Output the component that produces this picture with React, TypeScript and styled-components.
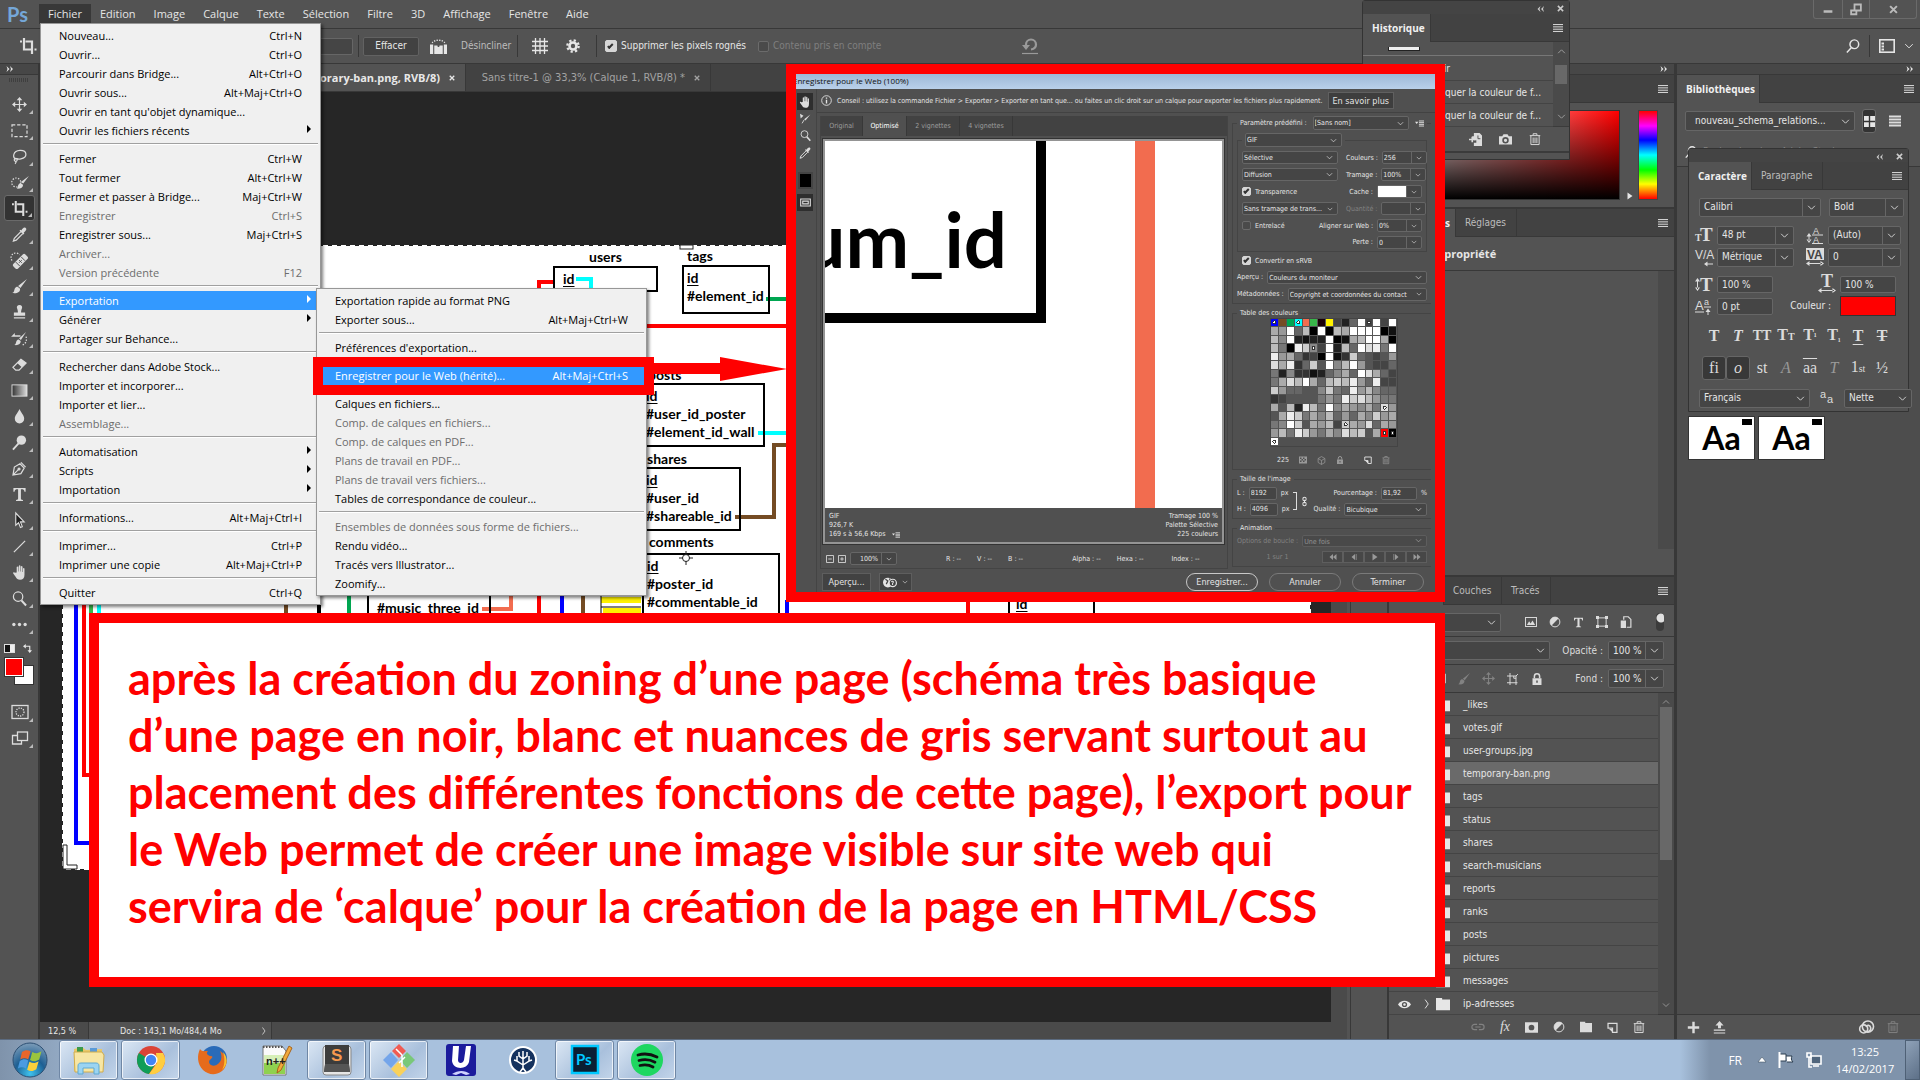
import React from "react";
import styled, { createGlobalStyle, css } from "styled-components";

const UI = '"DejaVu Sans Condensed", "Open Sans", sans-serif';
const SEGOE = '"Open Sans", "Noto Sans", sans-serif';
const CALIBRI = 'Lato, "Open Sans", sans-serif';

const C = {
  panel: "#535353",
  dark: "#424242",
  line: "#383838",
  field: "#454545",
  fieldLine: "#666666",
  text: "#e6e6e6",
  dim: "#a3a3a3",
  off: "#7f7f7f",
  red: "#ff0000",
};

const Global = createGlobalStyle`
  *, *::before, *::after { box-sizing: border-box; }
  body { margin: 0; background: #535353; overflow: hidden; }
  button, input, select { font: inherit; color: inherit; margin: 0; padding: 0; border: 0; background: none; border-radius: 0; }
  p, h2, ul { margin: 0; padding: 0; font: inherit; list-style: none; }
`;

/* ---------- icons ---------- */

const Svg = styled.svg<{ $s: number }>`
  width: ${(p) => p.$s}px;
  height: ${(p) => p.$s}px;
  flex: none;
  display: block;
  overflow: visible;
`;

type Draw = React.ReactNode;
const st = { fill: "none", stroke: "currentColor", strokeWidth: 1.3 };
const fl = { fill: "currentColor", stroke: "none" };

const ICONS: Record<string, Draw> = {
  move: (
    <g>
      <path {...st} d="M8 2v12M2 8h12" />
      <path {...fl} d="M8 0l3 3.4H5zM8 16l3-3.4H5zM0 8l3.4-3v6zM16 8l-3.4-3v6z" />
    </g>
  ),
  marquee: <rect {...st} x="0" y="2" width="16" height="12.500" strokeDasharray="3.500 2" />,
  lasso: (
    <g {...st}>
      <path d="M4.500 11C0 9 1 2 8.500 1.500c8-.3 8.500 7.500 1 9-2 .4-3.500.2-4.700-.3" />
      <circle cx="4" cy="11.500" r="1.600" />
      <path d="M4 13c.6 1 .2 2-.8 2.800" />
    </g>
  ),
  quick: (
    <g>
      <circle {...st} cx="4.500" cy="8" r="4.800" strokeDasharray="1.500 1.500" />
      <path {...fl} d="M18 1l-6 8-2.500-1.500zM9.200 8.700l2.600 1.600c0 3-3 4.700-6.800 4.200 1.500-1 1-3 2.200-4.700.5-.8 1.300-1.100 2-1.100z" />
    </g>
  ),
  crop: <path {...st} strokeWidth="2.200" d="M4 0v11.500h9M0 3.500h2M5.500 3.500h6.500v12.500M14.500 11.500h2" />,
  dropper: (
    <g>
      <path {...st} d="M9.500 5L2.500 12 1.500 15l3-1L11.500 7" />
      <path {...fl} d="M8 4l1-1 1 .7C11 2 12.500 0 14.300.8 16.300 2 15 4 12.500 6l.7 1-1 1z" />
    </g>
  ),
  heal: (
    <g>
      <path {...st} strokeDasharray="1.500 1.500" d="M0 8a5 5 0 0 1 8-6" />
      <g transform="rotate(-45 9 9)">
        <rect {...fl} x="0" y="5.500" width="18" height="7" rx="2" />
        <path d="M9 7v4M7 9h4M5 6v6M13 6v6" stroke="#535353" strokeWidth="1" />
      </g>
    </g>
  ),
  brush: (
    <path {...fl} d="M16 0L9 9.500 6.500 7.500zM6 8.300l2.600 2c.3 3.500-3 5.500-8.300 4.700 2.400-1 1.700-2.800 2.700-4.900.7-1.300 1.900-1.900 3-1.800z" />
  ),
  stamp: (
    <path {...fl} d="M8 0c2.200 0 3.200 1.600 2.700 3.300C10.200 5 9.700 6 9.700 8H14v3.500H2V8h4.300c0-2-.5-3-1-4.700C4.800 1.600 5.800 0 8 0zM2 13h12v1.500H2z" />
  ),
  history: (
    <g>
      <path {...fl} d="M15 1L9.500 9.500l-2-1.500zM7 9l2.300 1.700C9.300 14 7 15.500 2.500 15c2-1 1.500-2.500 2.300-4.300C5.300 9.600 6.200 9 7 9zM-1 6l4-4v2.500h6V6H3v0z" />
      <path {...st} strokeDasharray="1.500 1.500" d="M15 6c1 4 0 7.500-4 9" />
    </g>
  ),
  eraser: (
    <g>
      <path {...st} d="M9.500 2.500L15 6.500 7.500 14H4L1 11z" />
      <path {...fl} d="M9.500 2.500L15 6.500l-4.500 4.500-5-4.500z" />
    </g>
  ),
  gradient: (
    <g>
      <defs>
        <linearGradient id="tool-gradient">
          <stop offset="0" stopColor="#333" />
          <stop offset="1" stopColor="#ddd" />
        </linearGradient>
      </defs>
      <rect x="0" y="2" width="16" height="12" fill="url(#tool-gradient)" stroke="currentColor" />
    </g>
  ),
  drop: <path {...fl} d="M8 0c1.500 4 5 6.500 5 10.300A5 5 0 0 1 8 15.500a5 5 0 0 1-5-5.200C3 6.500 6.500 4 8 0z" />,
  dodge: (
    <g>
      <circle {...fl} cx="10" cy="5.500" r="5" />
      <path {...st} strokeWidth="2" d="M7 9L1 15.500" />
    </g>
  ),
  pen: (
    <g {...st}>
      <path d="M1 15l1.500-8.500L8.500 3l4.500 4.500-3.500 6zM1 15l6-6M9.500 1.500l5 5" />
      <circle cx="7.500" cy="8.500" r="1" />
    </g>
  ),
  type: <path {...fl} d="M1.500 1h13v4h-1.200c-.3-2-.9-2.500-3.800-2.500V12c0 1.500.4 1.700 2.200 1.800V15H4.300v-1.200c1.800-.1 2.200-.3 2.200-1.800V2.500C3.600 2.500 3 3 2.700 5H1.500z" />,
  select: <path d="M4 0l9 9.500H9l2 5-2 .9-2-5L4 13z" fill="#222" stroke="currentColor" strokeWidth="1.200" />,
  line: <path {...st} d="M2 14L14 2" />,
  hand: (
    <path {...fl} d="M5 8V2.500c0-1.200 1.600-1.200 1.700 0V7h.5V1.300C7.300 0 9 0 9 1.300V7h.5V2c0-1.200 1.700-1.200 1.700 0v5.500h.5V4c0-1.200 1.600-1.200 1.600 0v6.500c0 3.500-1.600 5.300-4.700 5.300-2.600 0-3.500-1.100-4.600-3L1.300 9c-.4-1 .8-1.700 1.600-.8z" />
  ),
  zoom: (
    <g {...st}>
      <circle cx="6.500" cy="6" r="5" />
      <path strokeWidth="2.200" d="M10 10l5 5.500" />
    </g>
  ),
  dots: (
    <g {...fl}>
      <circle cx="2" cy="8" r="1.800" />
      <circle cx="8" cy="8" r="1.800" />
      <circle cx="14" cy="8" r="1.800" />
    </g>
  ),
  mask: (
    <g {...st}>
      <rect x="0" y="1.500" width="16" height="13" />
      <circle cx="8" cy="8" r="4" strokeDasharray="1.200 1.200" />
    </g>
  ),
  screens: (
    <g {...st}>
      <path d="M5 5.500H.5V14h9v-3" />
      <rect x="5.500" y="2" width="10" height="8.500" />
    </g>
  ),
  swap: (
    <g>
      <path {...st} strokeWidth="2" d="M4 4h8v9" />
      <path {...fl} d="M0 4l5-4v8zM12 16l-4-5h8z" />
    </g>
  ),
  gear: (
    <g>
      <circle cx="8" cy="8" r="4" fill="none" stroke="currentColor" strokeWidth="3" />
      <circle cx="8" cy="8" r="6.500" fill="none" stroke="currentColor" strokeWidth="2.600" strokeDasharray="2.550 2.550" />
    </g>
  ),
  mesh: <path {...st} d="M3.500 0v16M8 0v16M12.500 0v16M0 3.500h16M0 8h16M0 12.500h16" />,
  level: (
    <g>
      <path {...fl} d="M0 6h3v9H0zM13 6h3v9h-3zM4 7h3c0 2 2 2 2 0h3v8H4z" />
      <path {...st} strokeDasharray="1.200 1.200" d="M2 4.500a7 5 0 0 1 12 0" />
    </g>
  ),
  undo: (
    <g {...st} strokeWidth="2.200">
      <path d="M4 9V6.500a5 5 0 0 1 10 0c0 3-2 4.500-5 5" />
      <path {...fl} d="M0 7h8l-4 5z" />
      <path strokeWidth="1.200" d="M0 15.500h16" />
    </g>
  ),
  search: (
    <g {...st} strokeWidth="1.700">
      <circle cx="9.500" cy="6" r="5" />
      <path d="M6 10l-5 5.500" />
    </g>
  ),
  workspace: (
    <g>
      <rect {...st} strokeWidth="1.600" x="0.800" y="1.800" width="14.400" height="12.400" />
      <path {...fl} d="M2.500 4.500h2.500v2H2.500zM2.500 7.500h2.500v2H2.500zM2.500 10.500h2.500v2H2.500z" />
    </g>
  ),
  chevron: <path {...st} strokeWidth="1.500" d="M2 5l6 6 6-6" />,
  up: <path {...st} strokeWidth="1.500" d="M2 11l6-6 6 6" />,
  right: <path {...st} strokeWidth="1.500" d="M5 1l5 7-5 7" />,
  dright: <path {...fl} d="M1 2l6 6-6 6 2-6zM8 2l6 6-6 6 2-6z" />,
  dleft: <path {...fl} d="M7 2L1 8l6 6-2-6zM14 2L8 8l6 6-2-6z" />,
  close: <path {...st} strokeWidth="3.500" d="M2 2l12 12M14 2L2 14" />,
  burger: <path {...st} strokeWidth="1.500" d="M0 2.500h16M0 6.200h16M0 9.900h16M0 13.500h16" />,
  list: <path {...st} strokeWidth="2.600" d="M0 2h16M0 6h16M0 10h16M0 14h16" />,
  tiles: <path {...fl} d="M0 0h7v7H0zM9 0h7v7H9zM0 9h7v7H0zM9 9h7v7H9z" />,
  newdoc: (
    <g>
      <path {...fl} d="M6 0h7l3 3v13H6v-4h3V9H6V8H4V4h2z" />
      <path {...st} strokeWidth="2" d="M0 8h8M4 4.500v7" />
      <path d="M11 3v4h3" fill="none" stroke="#424242" />
    </g>
  ),
  camera: (
    <path fillRule="evenodd" {...fl} d="M0 4h4l1.500-2.500h5L12 4h4v10H0zM8 5a4 4 0 1 0 0 8 4 4 0 0 0 0-8zm0 2a2 2 0 1 1 0 4 2 2 0 0 1 0-4z" />
  ),
  trash: (
    <g {...st}>
      <path d="M1 3.500h14M5.500 3V1h5v2M2.500 4v11.400h11V4M5.500 6v7.500M8 6v7.500M10.500 6v7.500" />
    </g>
  ),
  link: (
    <g {...st}>
      <path d="M7 5H4a3 3 0 0 0 0 6h3M9 5h3a3 3 0 0 1 0 6H9M5 8h6" />
    </g>
  ),
  chain: (
    <g {...st} strokeWidth="1.800">
      <circle cx="8" cy="3.500" r="3" />
      <circle cx="8" cy="12.500" r="3" />
      <path d="M8 5v6" />
    </g>
  ),
  fmask: (
    <path fillRule="evenodd" {...fl} d="M0 1.500h16v13H0zM8 4.500a3.500 3.500 0 1 0 0 7 3.500 3.500 0 0 0 0-7z" />
  ),
  adjust: (
    <g>
      <circle {...st} cx="8" cy="8" r="6.500" />
      <path {...fl} d="M12.600 3.400A6.500 6.500 0 1 0 3.400 12.600z" />
    </g>
  ),
  folder: <path {...fl} d="M0 1h7v1.800h9V15H0z" />,
  page: (
    <g>
      <path {...st} strokeWidth="1.800" d="M1.500 2h13v13H8L8 9H1.500z" />
      <path {...fl} d="M3 10h5v5z" />
    </g>
  ),
  image: (
    <g>
      <rect {...st} x="0.700" y="2" width="14.600" height="12" />
      <path {...fl} d="M2.500 12l3-5 2 3 2.500-4 3.500 6z" />
    </g>
  ),
  frame: (
    <g {...st}>
      <path d="M2.500 3v10M13.500 3v10M3 2.500h10M3 13.500h10" />
      <path {...fl} d="M0 0h4v4H0zM12 0h4v4h-4zM0 12h4v4H0zM12 12h4v4h-4z" />
    </g>
  ),
  smart: (
    <g>
      <path {...st} strokeWidth="1.600" d="M5 5V1h6l3.500 3.500V15H9" />
      <path {...fl} d="M1 6h7v10H1z" />
    </g>
  ),
  artboard: <path {...st} d="M4 0v16M0 4h12v12M0 13h14M9 4v3h3M14.500 1.500L12 4" />,
  lock: (
    <g>
      <path {...st} strokeWidth="2" d="M4.500 7V4.500a3.500 3.500 0 0 1 7 0V7" />
      <path fillRule="evenodd" {...fl} d="M2 7h12v9H2zM7 10v3h2v-3z" />
    </g>
  ),
  checker: <path {...fl} fillRule="evenodd" d="M0 1h16v14H0zM2 3v3h3V3zM8 3v3h3V3zM5 6v3h3V6zM11 6v3h3V6zM2 9v3h3V9zM8 9v3h3V9z" />,
  eye: (
    <g>
      <path {...fl} d="M0 8c3.500-6 12.500-6 16 0-3.500 6-12.500 6-16 0z" />
      <circle cx="8" cy="8" r="3.200" fill="#535353" />
      <circle {...fl} cx="8" cy="8" r="1.500" />
    </g>
  ),
  plus: <path {...st} strokeWidth="3" d="M8 1v14M1 8h14" />,
  upload: <path {...fl} d="M8 0l5 5.500h-3.200V9H6.200V5.500H3zM1 10.500h14V12H1zM1 14h14v1.500H1z" />,
  cloud: (
    <g {...st} strokeWidth="1.700">
      <circle cx="9.500" cy="7" r="6" />
      <circle cx="5" cy="9.500" r="4.300" />
      <path d="M7 11.500c2 2 6 .5 5.500-3S8.500 5 7.500 7.500" />
    </g>
  ),
  info: (
    <g {...st}>
      <circle cx="8" cy="8" r="7" />
      <path strokeWidth="2" d="M8 7v5.500M8 3.500v2" />
    </g>
  ),
  slice: (
    <g>
      <path {...fl} d="M15 2L8 11l-2-2zM0 1l5 3-4 4z" />
      <path {...st} d="M6 10l-3 5" />
    </g>
  ),
  globe: (
    <g>
      <circle {...fl} cx="6" cy="8" r="6" />
      <path d="M3 4l3 2-2 4M8 3l1 3" fill="none" stroke="#444" strokeWidth="1.500" />
      <circle cx="12" cy="8.500" r="4.500" fill="#424242" stroke="currentColor" strokeWidth="1.500" />
      <path {...st} d="M10.500 7.500c.5-2 3-1 2 .5l-.7 1v2" />
    </g>
  ),
  flyout: (
    <g>
      <path {...fl} d="M0 5h6l-3 4z" />
      <path {...st} strokeWidth="1.600" d="M7 3.500h9M7 6.500h9M7 9.500h9M7 12.500h9" />
    </g>
  ),
  cube: <path {...st} d="M8 1l6 3.500v7L8 15l-6-3.500v-7zM2 4.500L8 8l6-3.500M8 8v7" />,
  boxminus: <path {...st} strokeWidth="1.600" d="M1 1h14v14H1zM4.500 8h7" />,
  boxplus: <path {...st} strokeWidth="1.600" d="M1 1h14v14H1zM4.500 8h7M8 4.500v7" />,
  first: <path {...fl} d="M8 2v12L1 8zM15 2v12L8 8z" />,
  prev: <path {...fl} d="M10 2v12L3 8zM11.500 2H13v12h-1.500z" />,
  play: <path {...fl} d="M3 1l10 7-10 7z" />,
  next: <path {...fl} d="M6 2v12l7-6zM3 2h1.500v12H3z" />,
  last: <path {...fl} d="M1 2v12l7-6zM8 2v12l7-6z" />,
  view: <path {...st} strokeWidth="1.600" d="M1 3h14v10H1zM4 6h8v4H4z" />,
  min: <path {...st} strokeWidth="4" d="M1 12h14" />,
  restore: <path {...st} strokeWidth="2.400" d="M5.500 10H1.500v5h7v-5M6 2h8.500v8H6z" />,
};

const Icon = ({ n, s = 16 }: { n: string; s?: number }) => (
  <Svg $s={s} viewBox="0 0 16 16" aria-hidden="true">
    {ICONS[n]}
  </Svg>
);

/* ---------- shared controls ---------- */

const Row = styled.div<{ $gap?: number; $h?: number }>`
  display: flex;
  align-items: center;
  gap: ${(p) => p.$gap ?? 8}px;
  ${(p) => p.$h && `height: ${p.$h}px;`}
`;
const Grow = styled.span`
  flex: 1;
`;
const Nudge = styled.span`
  width: 1px;
`;
const Spacer = styled.span`
  width: 8px;
  flex: none;
`;
const Dim = styled.span`
  color: #828282;
`;
const Gray = styled.span`
  color: #bdbdbd;
`;
const IconButton = styled.button<{ $w?: number; $tone?: string }>`
  display: flex;
  align-items: center;
  justify-content: center;
  width: ${(p) => p.$w ?? 16}px;
  flex: none;
  color: ${(p) => p.$tone ?? "#dcdcdc"};
`;
const Box = styled.span<{ $w?: number; $h: number; $grow?: boolean }>`
  position: relative;
  display: flex;
  align-items: center;
  ${(p) => (p.$grow ? "flex: 1; min-width: 0;" : `width: ${p.$w}px; flex: none;`)}
  height: ${(p) => p.$h}px;
  background: ${C.field};
  border: 1px solid ${C.fieldLine};
  border-radius: 2px;
  color: ${C.text};
  & > svg {
    margin: 0 4px;
    pointer-events: none;
  }
`;
const Sel = styled.select<{ $pad: number }>`
  appearance: none;
  flex: 1;
  min-width: 0;
  height: 100%;
  padding-left: ${(p) => p.$pad}px;
  text-overflow: ellipsis;
  outline: none;
`;
const Field = styled.input<{ $pad: number }>`
  flex: 1;
  min-width: 0;
  width: 100%;
  height: 100%;
  padding-left: ${(p) => p.$pad}px;
  outline: none;
`;
const Split = styled.span`
  width: 1px;
  height: 100%;
  background: ${C.fieldLine};
`;

type CtlProps = {
  id: string;
  label?: string;
  value: string;
  w?: number;
  h?: number;
  grow?: boolean;
  pad?: number;
  split?: boolean;
  ic?: number;
  disabled?: boolean;
};
const Select = ({ id, label, value, w, h = 18, grow, pad = 5, split, ic = 9, disabled }: CtlProps) => (
  <Box $w={w} $h={h} $grow={grow}>
    <Sel id={id} aria-label={label} $pad={pad} disabled={disabled}>
      <option>{value}</option>
    </Sel>
    {split && <Split />}
    <Icon n="chevron" s={ic} />
  </Box>
);
const Input = ({ id, label, value, w, h = 16, grow, pad = 4 }: CtlProps) => (
  <Box $w={w} $h={h} $grow={grow}>
    <Field id={id} aria-label={label} $pad={pad} defaultValue={value} />
  </Box>
);

const Check = styled.input<{ $s: number }>`
  appearance: none;
  width: ${(p) => p.$s}px;
  height: ${(p) => p.$s}px;
  flex: none;
  border: 1px solid #6b6b6b;
  border-radius: 2px;
  background: #4a4a4a;
  display: grid;
  place-items: center;
  &:checked {
    background: #d6d6d6;
    border-color: #d6d6d6;
  }
  &:checked::after {
    content: "";
    width: 6px;
    height: 3px;
    border: solid #333;
    border-width: 0 0 2px 2px;
    transform: rotate(-45deg) translate(0, -1px);
  }
`;

/* ---------- page frame ---------- */

const Shell = styled.div`
  position: relative;
  display: flex;
  flex-direction: column;
  height: 100vh;
  overflow: hidden;
  background: ${C.panel};
  color: ${C.text};
  font: 10px/14px ${UI};
`;
const MenuBar = styled.nav`
  display: flex;
  align-items: center;
  height: 29px;
  flex: none;
  padding: 0 0 1px 7px;
  border-bottom: 1px solid ${C.line};
  font: 11px/16px ${SEGOE};
`;
const PsMark = styled.span`
  width: 32px;
  font: 700 20px/24px ${CALIBRI};
  color: #75a7d8;
`;
const MenuTitle = styled.button<{ $open?: boolean }>`
  height: 20px;
  padding: 0 9px;
  ${(p) => p.$open && "background: #383838;"}
`;
const WinButtons = styled.div`
  display: flex;
  align-self: flex-start;
  height: 19px;
  margin: 0 3px 0 auto;
  border: 1px solid #6a6a6a;
  border-top: 0;
  border-radius: 0 0 3px 3px;
  & > button + button {
    border-left: 1px solid #6a6a6a;
  }
`;

const OptionsBar = styled.div`
  display: flex;
  align-items: center;
  height: 35px;
  flex: none;
  padding: 0 6px;
  border-bottom: 1px solid ${C.line};
`;
const Cell = styled.div<{ $w: number; $pl?: number; $dim?: boolean }>`
  display: flex;
  align-items: center;
  width: ${(p) => p.$w}px;
  padding-left: ${(p) => p.$pl ?? 0}px;
  gap: 4px;
  flex: none;
  white-space: nowrap;
  ${(p) => p.$dim && `color: ${C.off};`}
`;
const Rule = styled.span`
  width: 1px;
  height: 22px;
  flex: none;
  background: ${C.line};
`;
const Plain = styled.button`
  width: 56px;
  height: 19px;
  background: ${C.dark};
  border: 1px solid #626262;
  border-radius: 2px;
`;
const CropSlot = styled.span`
  padding-left: 14px;
  color: #ddd;
`;

const Main = styled.div`
  display: flex;
  flex: 1;
  min-height: 0;
`;

/* ---------- tool column ---------- */

const Tools = styled.aside`
  width: 40px;
  flex: none;
  border-right: 2px solid ${C.line};
`;
const Strip = styled.div<{ $end?: boolean }>`
  display: flex;
  align-items: center;
  justify-content: ${(p) => (p.$end ? "flex-end" : "flex-start")};
  height: 11px;
  flex: none;
  padding: 0 6px;
  background: #474747;
  border-bottom: 1px solid ${C.line};
`;
const Grip = styled.div`
  width: 20px;
  height: 4px;
  margin: 3px 0 9px 9px;
  background: repeating-linear-gradient(90deg, #3f3f3f 0 1px, transparent 1px 2px);
`;
const Tool = styled.button<{ $on?: boolean }>`
  position: relative;
  display: flex;
  align-items: center;
  justify-content: center;
  width: 31px;
  height: 26px;
  margin-left: 4px;
  color: #dcdcdc;
  ${(p) => p.$on && "background: #333; border: 1px solid #6a6a6a; border-radius: 3px;"}
  &::after {
    content: "";
    position: absolute;
    right: 2px;
    bottom: 3px;
    border: 2px solid transparent;
    border-right-color: #bbb;
    border-bottom-color: #bbb;
  }
`;
const Swatches = styled.div`
  padding: 2px 0 12px 4px;
`;
const MiniPair = styled.span`
  width: 11px;
  height: 9px;
  background: linear-gradient(90deg, #111 60%, #eee 60%);
  border: 1px solid #ddd;
`;
const Pair = styled.div`
  position: relative;
  height: 30px;
`;
const Swatch = styled.button<{ $c: string; $x: number; $y: number }>`
  position: absolute;
  left: ${(p) => p.$x}px;
  top: ${(p) => p.$y}px;
  width: 18px;
  height: 18px;
  background: ${(p) => p.$c};
  border: 1px solid #fff;
  outline: 1px solid #333;
`;

/* ---------- document area ---------- */

const Doc = styled.section`
  display: flex;
  flex-direction: column;
  flex: 1;
  min-width: 0;
`;
const DocTabs = styled.div`
  display: flex;
  height: 28px;
  flex: none;
  background: ${C.dark};
  border-bottom: 1px solid ${C.line};
`;
const DocTab = styled.div<{ $w: number; $on?: boolean }>`
  display: flex;
  align-items: center;
  justify-content: flex-end;
  gap: 9px;
  width: ${(p) => p.$w}px;
  padding-right: 10px;
  white-space: nowrap;
  border-right: 1px solid ${C.line};
  color: ${(p) => (p.$on ? "#e8e8e8" : C.dim)};
  font-size: 11px;
  ${(p) => p.$on && `background: ${C.panel}; font: 700 11px/14px ${SEGOE};`}
`;
const Stage = styled.div`
  display: flex;
  flex: 1;
  min-height: 0;
`;
const Canvas = styled.div`
  position: relative;
  flex: 1;
  overflow: hidden;
  background: #262626;
  color: #000;
  font: 700 14px/18px ${CALIBRI};
`;
const VBar = styled.div`
  width: 16px;
  flex: none;
  background: #4a4a4a;
`;
const Status = styled.footer`
  display: flex;
  align-items: center;
  height: 17px;
  flex: none;
  background: #4a4a4a;
  font-size: 9px;
  & > span {
    padding-left: 8px;
    width: 48px;
  }
  & > div {
    display: flex;
    align-items: center;
    justify-content: space-between;
    width: 184px;
    height: 17px;
    padding: 0 3px 0 31px;
    background: ${C.panel};
    border: 1px solid ${C.line};
    border-width: 0 1px;
  }
`;
const Artboard = styled.div`
  position: absolute;
  left: 22px;
  top: 153px;
  width: 1249px;
  height: 625px;
  background: #fff;
`;
const Ants = styled.svg`
  position: absolute;
  inset: 0;
  width: 100%;
  height: 100%;
`;
const Node = styled.div<{ $x: number; $y: number; $w: number; $h: number; $in?: number }>`
  position: absolute;
  left: ${(p) => p.$x}px;
  top: ${(p) => p.$y}px;
  width: ${(p) => p.$w}px;
  height: ${(p) => p.$h}px;
  padding: 2px ${(p) => p.$in ?? 3}px;
  border: 2px solid #000;
  white-space: nowrap;
  & > div {
    height: 18px;
    text-underline-offset: 2px;
  }
`;
const NodeName = styled.div<{ $x: number; $y: number }>`
  position: absolute;
  left: ${(p) => p.$x}px;
  top: ${(p) => p.$y}px;
`;

/* ---------- docks ---------- */

const MiniDock = styled.aside`
  width: 39px;
  flex: none;
  margin-left: 3px;
  border: 1px solid ${C.line};
  border-width: 0 2px 0 1px;
`;
const Dock = styled.aside<{ $w: number }>`
  display: flex;
  flex-direction: column;
  width: ${(p) => p.$w}px;
  flex: none;
  border-right: 3px solid ${C.line};
`;
const Tabs = styled.div`
  display: flex;
  align-items: center;
  height: 28px;
  flex: none;
  padding-right: 6px;
  background: ${C.dark};
  border-bottom: 1px solid ${C.line};
`;
const Tab = styled.button<{ $w: number; $on?: boolean; $end?: boolean }>`
  width: ${(p) => p.$w}px;
  height: 27px;
  padding: 0 0 0 9px;
  text-align: ${(p) => (p.$end ? "right" : "left")};
  color: ${(p) => (p.$on ? "#f0f0f0" : "#bdbdbd")};
  border-right: 1px solid ${C.line};
  white-space: nowrap;
  ${(p) => p.$end && "padding-right: 9px;"}
  ${(p) => p.$on && `background: ${C.panel}; height: 28px; font: 700 10px/14px ${SEGOE};`}
`;
const ColorBody = styled.div`
  display: flex;
  gap: 17px;
  height: 106px;
  flex: none;
  padding: 7px 16px 7px 20px;
  border-bottom: 2px solid ${C.line};
`;
const ColorField = styled.div`
  flex: 1;
  border: 1px solid #333;
  background: linear-gradient(to top, #000, transparent), linear-gradient(to right, #fff, #f00);
`;
const Hue = styled.div`
  width: 20px;
  border: 1px solid #444;
  background: linear-gradient(#f00, #f0f 17%, #00f 33%, #0ff 50%, #0f0 67%, #ff0 83%, #f00);
`;
const HueSlot = styled.div`
  display: flex;
  align-items: flex-end;
  gap: 4px;
  margin-left: -11px;
  & > div {
    height: 100%;
  }
`;
const PropsTitle = styled.div`
  height: 34px;
  flex: none;
  padding: 10px 0 0 11px;
  border-bottom: 1px solid ${C.line};
  font: 700 11px/14px ${SEGOE};
`;
const PropsBody = styled.div`
  display: flex;
  flex: 1;
  padding-bottom: 26px;
  border-bottom: 2px solid ${C.line};
  justify-content: flex-end;
`;
const Bar = styled.div<{ $h: number; $pt?: number }>`
  display: flex;
  align-items: center;
  gap: 12px;
  height: ${(p) => p.$h}px;
  flex: none;
  padding: ${(p) => p.$pt ?? 0}px 10px 0 8px;
  color: #dcdcdc;
  border-bottom: 1px solid ${C.line};
`;
const Toggle = styled.button`
  width: 10px;
  height: 18px;
  border-radius: 5px;
  background: radial-gradient(circle at 5px 5px, #e0e0e0 0 4px, transparent 5px), #3b3b3b;
`;
const Layers = styled.div`
  display: flex;
  height: 322px;
  flex: none;
  border-bottom: 1px solid ${C.line};
`;
const LayerList = styled.ul`
  flex: 1;
`;
const Layer = styled.li<{ $on?: boolean }>`
  display: flex;
  align-items: center;
  height: 23px;
  padding: 2px 0 0 9px;
  color: #e6e6e6;
  border-bottom: 1px solid #444;
  ${(p) => p.$on && "background: #6a6a6a;"}
  & > span:last-child {
    margin-left: 13px;
  }
`;
const EyeCell = styled.span`
  width: 34px;
  display: flex;
  align-items: center;
  justify-content: space-between;
  margin-right: 4px;
`;
const Scroll = styled.div`
  display: flex;
  flex-direction: column;
  align-items: center;
  justify-content: space-between;
  width: 16px;
  padding: 5px 0;
  background: #4a4a4a;
  color: #aaa;
`;
const Thumb = styled.span<{ $h: number; $gap: number }>`
  width: 12px;
  height: ${(p) => p.$h}px;
  background: #686868;
  margin-bottom: ${(p) => p.$gap}px;
`;
const LayerFoot = styled.div`
  display: flex;
  align-items: center;
  justify-content: flex-end;
  gap: 15px;
  height: 24px;
  flex: none;
  padding-right: 29px;
  color: #dcdcdc;
`;
const Fx = styled.i`
  font: italic 14px/16px "Liberation Serif", serif;
`;
const LibDock = styled.aside`
  display: flex;
  flex-direction: column;
  width: 243px;
  flex: none;
`;
const LibBody = styled.div`
  flex: 1;
  background: #4d4d4d;
`;
const LibHead = styled.div`
  padding: 6px 13px 0 8px;
  height: 64px;
  background: ${C.panel};
  border-bottom: 1px solid ${C.line};
`;
const LibSearch = styled.div`
  display: flex;
  align-items: center;
  gap: 6px;
  height: 37px;
`;
const TileBtn = styled.button`
  display: grid;
  place-items: center;
  width: 24px;
  height: 24px;
  border: 1px solid #6a6a6a;
  border-radius: 3px;
  background: #333;
`;
const Styles = styled.div`
  display: flex;
  gap: 3px;
  padding: 249px 0 0 11px;
`;
const StyleTile = styled.button`
  position: relative;
  width: 67px;
  height: 44px;
  background: #fff;
  border: 1px solid #333;
  color: #000;
  font: 700 32px/42px ${CALIBRI};
  &::after {
    content: "";
    position: absolute;
    right: 2px;
    top: 2px;
    width: 10px;
    height: 6px;
    background: #000;
  }
`;
const LibFoot = styled.div`
  display: flex;
  align-items: center;
  gap: 13px;
  height: 25px;
  flex: none;
  padding: 0 21px 0 10px;
  color: #dcdcdc;
  border-top: 1px solid ${C.line};
`;

/* ---------- taskbar ---------- */

const Taskbar = styled.footer`
  display: flex;
  align-items: center;
  height: 41px;
  flex: none;
  padding-left: 3px;
  border-top: 1px solid #5b6b80;
  background: linear-gradient(90deg, #7f93ab 0, #a8c1dd 130px, #a8c1dd 1680px, #7f93ab 1710px);
  font: 12px/17px ${SEGOE};
`;
const TaskItem = styled.button<{ $on?: boolean; $w?: number }>`
  display: grid;
  place-items: center;
  width: ${(p) => p.$w ?? 59}px;
  height: 40px;
  margin-right: 3px;
  border-radius: 3px;
  border: 1px solid transparent;
  ${(p) =>
    p.$on &&
    css`
      border-color: #6f87a5;
      box-shadow: inset 0 0 0 1px rgba(255, 255, 255, 0.7);
      background: linear-gradient(135deg, #dbe7f4, #a9c0dc 60%, #c3d5ea);
    `}
`;
const Tray = styled.div`
  display: flex;
  align-items: center;
  gap: 12px;
  height: 40px;
  margin-left: auto;
  color: #fff;
`;
const Lang = styled.span`
  margin-right: 4px;
`;
const Clock = styled.time`
  text-align: center;
  width: 62px;
  font-size: 11px;
`;
const Peek = styled.button`
  width: 15px;
  height: 40px;
  margin-left: -3px;
  border: 1px solid #4f6176;
  background: linear-gradient(135deg, #8fa2b8, #5d7088);
`;

/* ---------- floating windows ---------- */

const Float = styled.section<{ $x: number; $y: number; $w: number; $h: number }>`
  position: absolute;
  left: ${(p) => p.$x}px;
  top: ${(p) => p.$y}px;
  width: ${(p) => p.$w}px;
  height: ${(p) => p.$h}px;
  background: ${C.panel};
  border: 1px solid #333;
  border-radius: 3px 3px 0 0;
`;
const FloatHead = styled.div`
  display: flex;
  align-items: center;
  justify-content: flex-end;
  gap: 12px;
  height: 13px;
  padding: 2px 5px 0 0;
  background: #444;
  color: #ccc;
`;
const HistoryList = styled.div`
  display: flex;
  height: 84px;
`;
const HistoryCol = styled.div`
  flex: 1;
`;
const Snapshot = styled.div`
  height: 14px;
  padding: 5px 0 0 25px;
  border-bottom: 1px solid #777;
  & > i {
    display: block;
    width: 32px;
    height: 4px;
    background: #eee;
    border: 1px solid #222;
    border-top: 0;
  }
`;
const HistoryRow = styled.div<{ $h: number; $pr: number }>`
  height: ${(p) => p.$h}px;
  padding-right: ${(p) => p.$pr}px;
  line-height: ${(p) => p.$h}px;
  text-align: right;
  white-space: nowrap;
  border-bottom: 1px solid #444;
`;
const HistoryFoot = styled.div`
  display: flex;
  align-items: center;
  justify-content: flex-end;
  gap: 17px;
  height: 27px;
  padding-right: 28px;
  border: solid #3b3b3b;
  border-width: 1px 0 2px;
  color: #dcdcdc;
`;
const CharBody = styled.div`
  padding: 6px 7px 0 6px;
`;
const CharRow = styled.div<{ $mt?: number }>`
  display: flex;
  align-items: center;
  gap: 4px;
  height: 22px;
  margin-top: ${(p) => p.$mt ?? 0}px;
`;
const Faces = styled.div<{ $mt: number }>`
  display: flex;
  justify-content: center;
  margin-top: ${(p) => p.$mt}px;
`;
const Face = styled.button<{ $on?: boolean; $bold?: boolean; $off?: boolean; $css?: string }>`
  width: 24px;
  height: 24px;
  flex: none;
  font: ${(p) => (p.$bold ? 700 : 400)} 16px/20px "Liberation Serif", serif;
  white-space: nowrap;
  color: ${(p) => (p.$off ? "#999" : "#dcdcdc")};
  ${(p) => p.$on && "background: #383838; border: 1px solid #666; border-radius: 3px;"}
  ${(p) => p.$css}
  & small {
    font-size: 10px;
  }
`;
const Patch = styled.button`
  width: 56px;
  height: 20px;
  background: ${C.red};
  border: 1px solid #333;
`;
const GlyphSvg = styled.svg`
  width: 18px;
  height: 18px;
  flex: none;
  overflow: visible;
  fill: #dcdcdc;
  stroke: none;
  font-family: "Liberation Serif", serif;
`;

/* ---------- drop-down menus ---------- */

const Menu = styled.ul<{ $x: number; $y: number; $w: number }>`
  position: absolute;
  left: ${(p) => p.$x}px;
  top: ${(p) => p.$y}px;
  width: ${(p) => p.$w}px;
  padding: 2px;
  background: #f0f0f0;
  border: 1px solid #979797;
  box-shadow: 2px 2px 3px rgba(0, 0, 0, 0.5);
  color: #000;
  font: 11px/19px ${SEGOE};
`;
const MenuSep = styled.li`
  height: 9px;
  padding-top: 3px;
  &::before {
    content: "";
    display: block;
    height: 2px;
    border-top: 1px solid #a0a0a0;
    background: #fff;
  }
`;
const MenuEntry = styled.button<{ $on?: boolean; $off?: boolean }>`
  position: relative;
  display: flex;
  justify-content: space-between;
  width: 100%;
  height: 19px;
  padding: 0 16px;
  white-space: nowrap;
  color: ${(p) => (p.$off ? "#6d6d6d" : p.$on ? "#fff" : "#000")};
  ${(p) => p.$on && "background: #3399ff;"}
`;
const Arrow = styled.i`
  position: absolute;
  right: 7px;
  top: 4px;
  border: 4px solid transparent;
  border-left-color: currentColor;
  border-right: 0;
`;
type Item = null | [string, string?, ("off" | "on" | "sub" | "onsub")?];

const MenuBox = ({ items, ...pos }: { items: Item[]; $x: number; $y: number; $w: number }) => (
  <Menu {...pos}>
    {items.map((it, i) =>
      it === null ? (
        <MenuSep key={i} />
      ) : (
        <li key={i}>
          <MenuEntry $on={it[2] === "on" || it[2] === "onsub"} $off={it[2] === "off"}>
            <span>{it[0]}</span>
            <span>{it[1]}</span>
            {(it[2] === "sub" || it[2] === "onsub") && <Arrow />}
          </MenuEntry>
        </li>
      )
    )}
  </Menu>
);

const FILE: Item[] = [
  ["Nouveau...", "Ctrl+N"],
  ["Ouvrir...", "Ctrl+O"],
  ["Parcourir dans Bridge...", "Alt+Ctrl+O"],
  ["Ouvrir sous...", "Alt+Maj+Ctrl+O"],
  ["Ouvrir en tant qu'objet dynamique..."],
  ["Ouvrir les fichiers récents", "", "sub"],
  null,
  ["Fermer", "Ctrl+W"],
  ["Tout fermer", "Alt+Ctrl+W"],
  ["Fermer et passer à Bridge...", "Maj+Ctrl+W"],
  ["Enregistrer", "Ctrl+S", "off"],
  ["Enregistrer sous...", "Maj+Ctrl+S"],
  ["Archiver...", "", "off"],
  ["Version précédente", "F12", "off"],
  null,
  ["Exportation", "", "onsub"],
  ["Générer", "", "sub"],
  ["Partager sur Behance..."],
  null,
  ["Rechercher dans Adobe Stock..."],
  ["Importer et incorporer..."],
  ["Importer et lier..."],
  ["Assemblage...", "", "off"],
  null,
  ["Automatisation", "", "sub"],
  ["Scripts", "", "sub"],
  ["Importation", "", "sub"],
  null,
  ["Informations...", "Alt+Maj+Ctrl+I"],
  null,
  ["Imprimer...", "Ctrl+P"],
  ["Imprimer une copie", "Alt+Maj+Ctrl+P"],
  null,
  ["Quitter", "Ctrl+Q"],
];
const EXPORT: Item[] = [
  ["Exportation rapide au format PNG"],
  ["Exporter sous...", "Alt+Maj+Ctrl+W"],
  null,
  ["Préférences d'exportation..."],
  null,
  ["Enregistrer pour le Web (hérité)...", "Alt+Maj+Ctrl+S", "on"],
  null,
  ["Calques en fichiers..."],
  ["Comp. de calques en fichiers...", "", "off"],
  ["Comp. de calques en PDF...", "", "off"],
  ["Plans de travail en PDF...", "", "off"],
  ["Plans de travail vers fichiers...", "", "off"],
  ["Tables de correspondance de couleur..."],
  null,
  ["Ensembles de données sous forme de fichiers...", "", "off"],
  ["Rendu vidéo..."],
  ["Tracés vers Illustrator..."],
  ["Zoomify..."],
];

/* ---------- annotations ---------- */

const Ring = styled.div<{ $x: number; $y: number; $w: number; $h: number }>`
  position: absolute;
  left: ${(p) => p.$x}px;
  top: ${(p) => p.$y}px;
  width: ${(p) => p.$w}px;
  height: ${(p) => p.$h}px;
  border: 10px solid ${C.red};
  pointer-events: none;
`;
const RedArrow = styled.svg`
  position: absolute;
  left: 653px;
  top: 357px;
  width: 134px;
  height: 24px;
`;
const Callout = styled.p`
  position: absolute;
  left: 89px;
  top: 613px;
  width: 1356px;
  height: 374px;
  padding: 27px 29px;
  border: 10px solid ${C.red};
  background: #fff;
  color: ${C.red};
  font: 700 45px/57px ${CALIBRI};
  white-space: pre;
`;

/* ---------- save-for-web dialog ---------- */

const Dialog = styled.section`
  position: absolute;
  left: 786px;
  top: 64px;
  width: 659px;
  height: 538px;
  border: 10px solid ${C.red};
  background: #505050;
  overflow: hidden;
  font: 7px/12px ${UI};
  color: #e4e4e4;
`;
const DTitle = styled.h2`
  height: 15px;
  background: linear-gradient(#9db8d6, #b9d0ea);
  color: #111;
  font: 8px/14px ${SEGOE};
  text-indent: -3px;
`;
const DMain = styled.div`
  display: flex;
  height: 503px;
`;
const DTools = styled.div`
  display: flex;
  flex-direction: column;
  align-items: center;
  width: 21px;
  flex: none;
  padding: 4px 2px 0 0;
  border-right: 1px solid #444;
`;
const DTool = styled.button<{ $on?: boolean }>`
  display: grid;
  place-items: center;
  width: 16px;
  height: 17px;
  color: #ddd;
  ${(p) => p.$on && "background: #2e2e2e;"}
`;
const DPatch = styled.button`
  width: 15px;
  height: 17px;
  margin: 11px 0 5px;
  background: #000;
  border: 2px solid #444;
`;
const DRight = styled.div`
  flex: 1;
  min-width: 0;
`;
const DTip = styled.div`
  display: flex;
  align-items: center;
  gap: 5px;
  height: 24px;
  padding-left: 4px;
  border-bottom: 1px solid #424242;
  white-space: nowrap;
  & > button {
    margin-left: auto;
    margin-right: 41px;
    width: 77px;
    height: 17px;
    font-size: 9px;
    background: #3e3e3e;
    border: 1px solid #606060;
  }
`;
const DCols = styled.div`
  display: flex;
  height: 456px;
  padding: 3px 0 0 3px;
`;
const DView = styled.div`
  width: 408px;
  flex: none;
  border: 1px solid #444;
  border-top: 0;
`;
const DTabs = styled.div`
  display: flex;
  height: 20px;
  background: #424242;
`;
const DTab = styled.button<{ $on?: boolean; $w: number }>`
  width: ${(p) => p.$w}px;
  color: ${(p) => (p.$on ? "#fff" : "#9c9c9c")};
  border-right: 1px solid #383838;
  ${(p) => p.$on && "background: #505050;"}
`;
const DFrame = styled.div`
  margin: 3px 3px 0 2px;
  height: 405px;
  border: 2px solid #949494;
  outline: 1px solid #333;
`;
const DImage = styled.div`
  position: relative;
  height: 367px;
  background: #fff;
  overflow: hidden;
  color: #000;
`;
const DBox = styled.div`
  position: absolute;
  left: -20px;
  top: -20px;
  width: 241px;
  height: 202px;
  border: 10px solid #000;
  display: flex;
  align-items: flex-end;
  justify-content: flex-end;
  padding: 0 29px 29px 0;
  font: 700 76px/90px ${CALIBRI};
`;
const DStripe = styled.div`
  position: absolute;
  left: 310px;
  top: 0;
  width: 20px;
  height: 100%;
  background: #f26c4f;
`;
const DInfo = styled.div`
  display: flex;
  justify-content: space-between;
  padding: 4px 4px 0;
  line-height: 9px;
  & > div:last-child {
    text-align: right;
  }
`;
const DRead = styled.div`
  display: flex;
  align-items: center;
  height: 27px;
  padding: 2px 5px 0;
  gap: 4px;
  white-space: nowrap;
`;
const DButtons = styled.div`
  display: flex;
  align-items: center;
  gap: 8px;
  padding: 4px 11px 0 5px;
  font-size: 9px;
`;
const DBtn = styled.button<{ $w: number }>`
  width: ${(p) => p.$w}px;
  height: 18px;
  background: #424242;
  border: 1px solid #5e5e5e;
  display: flex;
  align-items: center;
  justify-content: center;
  gap: 6px;
`;
const Pill = styled.button<{ $main?: boolean }>`
  width: 72px;
  height: 18px;
  margin-left: 3px;
  border: 1px solid ${(p) => (p.$main ? "#c8c8c8" : "#7a7a7a")};
  border-radius: 9px;
`;
const DSide = styled.div`
  display: flex;
  flex-direction: column;
  gap: 3px;
  flex: 1;
  min-width: 0;
  padding: 0 4px;
`;
const Group = styled.fieldset<{ $h: number; $pt?: number; $r?: boolean }>`
  margin: 0;
  min-width: 0;
  height: ${(p) => p.$h}px;
  flex: none;
  padding: ${(p) => p.$pt ?? 0}px 4px 0;
  border: 1px solid #444;
  ${(p) => !p.$r && "border-right: 0;"}
  & > legend {
    padding: 0 3px;
    display: flex;
    align-items: center;
    gap: 6px;
    white-space: nowrap;
  }
`;
const DRow = styled.div<{ $h: number; $off?: boolean }>`
  display: flex;
  align-items: center;
  gap: 4px;
  height: ${(p) => p.$h}px;
  white-space: nowrap;
  ${(p) => p.$off && "color: #828282;"}
`;
const Palette = styled.div`
  display: grid;
  grid-template-columns: repeat(16, 1fr);
  grid-template-rows: repeat(15, 1fr);
  width: 126px;
  height: 127px;
  margin: 0 0 0 34px;
  outline: 1px solid #444;
`;
const Chip = styled.i<{ $c: string; $dot?: boolean }>`
  border: 1px solid #555;
  border-width: 0 1px 1px 0;
  background: ${(p) => p.$c};
  ${(p) => p.$dot && `background: radial-gradient(circle, #fff 0 1px, #333 1px 2px, ${p.$c} 2px);`}
`;
const PalIcons = styled.span`
  display: flex;
  align-items: center;
  gap: 10px;
  margin-left: 40px;
  color: #999;
  & > b {
    font-weight: 400;
    color: #e4e4e4;
  }
  & > svg:nth-of-type(4) {
    margin-left: 10px;
    color: #e4e4e4;
  }
`;
const SizeGrid = styled.div`
  display: flex;
  align-items: center;
  gap: 3px;
  & > div:last-child {
    flex: 1;
    padding-left: 2px;
  }
`;
const Bracket = styled.span`
  width: 4px;
  height: 18px;
  border: 1px solid #ddd;
  border-left: 0;
`;
const Matte = styled.span`
  & select {
    background: #fff;
  }
`;
const Dimmed = styled.span`
  flex: 1;
  display: flex;
  opacity: 0.6;
`;
const Steps = styled.div`
  display: flex;
  & > button {
    display: grid;
    place-items: center;
    width: 21px;
    height: 12px;
    border: 1px solid #5e5e5e;
    background: #474747;
    color: #999;
  }
`;

const HEAD = ["#0000ff", "#754c24", "#00a651", "#00ffff", "#f26c4f", "#39b54a", "#1a0007", "#fff200"];
const SHADES = [
  "008ddff6426f4f4f",
  "a9f6b0f0baffff01ffde",
  "b8f2122f01abffa0fde8",
  "b70ec84f2b6fde7f9e12bf",
  "e9a6340f13c6545943281",
  "dae36c5f8bf95446a5dfe",
  "728331268a6fda64469d6",
  "7adbfa6bcbe96e44d6b8",
  "c966558c76e9b8665bc9",
  "345555797ecdb977a63de",
  "a5b2eb7f8a98a7d98dc8",
  "5aec7a8b696a8c9a3a8f",
  "78fc5a9b4ca9d6a9c78a",
  "9b7ec97a8dbc5a8766",
];
const chipColor = (i: number) => {
  if (i < 8) return HEAD[i];
  if (i === 222) return "#ff0000";
  if (i === 223) return "#000";
  if (i === 224) return "#fff";
  const g = SHADES[Math.floor(i / 16)][i % 16] ?? "8";
  return `#${g}${g}${g}`;
};
const DOTS = [0, 3, 12, 53, 174, 201, 222, 223, 224];

const Pairing = ({ id, label, value }: { id: string; label: string; value: string }) => (
  <>
    <Grow />
    <label htmlFor={id}>{label}</label>
    <Select id={id} value={value} w={45} h={13} pad={1} ic={6} split />
  </>
);

const SaveForWeb = () => (
  <Dialog aria-label="Enregistrer pour le Web">
    <DTitle>Enregistrer pour le Web (100%)</DTitle>
    <DMain>
      <DTools>
        <DTool $on aria-label="Main"><Icon n="hand" s={12} /></DTool>
        <DTool aria-label="Tranche"><Icon n="slice" s={11} /></DTool>
        <DTool aria-label="Loupe"><Icon n="zoom" s={11} /></DTool>
        <DTool aria-label="Pipette"><Icon n="dropper" s={12} /></DTool>
        <DPatch aria-label="Couleur de la pipette" />
        <DTool $on aria-label="Tranches visibles"><Icon n="view" s={11} /></DTool>
      </DTools>
      <DRight>
        <DTip>
          <Icon n="info" s={11} />
          <span>
            Conseil : utilisez la commande Fichier &gt; Exporter &gt; Exporter en tant que... ou faites un clic droit sur
            un calque pour exporter les fichiers plus rapidement.
          </span>
          <button>En savoir plus</button>
        </DTip>
        <DCols>
          <DView>
            <DTabs>
              <DTab $w={42}>Original</DTab>
              <DTab $w={44} $on>Optimisé</DTab>
              <DTab $w={53}>2 vignettes</DTab>
              <DTab $w={53}>4 vignettes</DTab>
            </DTabs>
            <DFrame>
              <DImage>
                <DBox>um_id</DBox>
                <DStripe />
              </DImage>
              <DInfo>
                <div>
                  GIF
                  <br />
                  926,7 K
                  <br />
                  <Row $gap={6}>
                    169 s à 56,6 Kbps <Icon n="flyout" s={8} />
                  </Row>
                </div>
                <div>
                  Tramage 100 %<br />
                  Palette Sélective
                  <br />
                  225 couleurs
                </div>
              </DInfo>
            </DFrame>
            <DRead>
              <Icon n="boxminus" s={8} />
              <Icon n="boxplus" s={8} />
              <Select id="zoom" label="Zoom" value="100%" w={47} h={13} pad={9} ic={6} split />
              <Grow />
              <Grow />
              <output>R : --</output>
              <Spacer />
              <output>V : --</output>
              <Spacer />
              <output>B : --</output>
              <Grow />
              <Grow />
              <output>Alpha : --</output>
              <Spacer />
              <output>Hexa : --</output>
              <Spacer />
              <Spacer />
              <output>Index : --</output>
              <Grow />
            </DRead>
          </DView>
          <DSide>
            <Group $h={188} $pt={3}>
              <legend>
                <label htmlFor="preset">Paramètre prédéfini :</label>
                <Select id="preset" value="[Sans nom]" w={96} h={14} pad={1} ic={7} />
                <Icon n="flyout" s={9} />
              </legend>
              <Group $h={119} $pt={2} $r>
                <legend>
                  <Select id="format" label="Format" value="GIF" w={97} h={14} pad={1} ic={7} />
                </legend>
                <DRow $h={17}>
                  <Select id="pal" label="Palette" value="Sélective" w={96} h={13} pad={1} ic={7} />
                  <Pairing id="colors" label="Couleurs :" value="256" />
                </DRow>
                <DRow $h={17}>
                  <Select id="dith" label="Méthode de tramage" value="Diffusion" w={96} h={13} pad={1} ic={7} />
                  <Pairing id="dither" label="Tramage :" value="100%" />
                </DRow>
                <DRow $h={17}>
                  <Check $s={9} id="tr" type="checkbox" defaultChecked />
                  <label htmlFor="tr">Transparence</label>
                  <Grow />
                  <label htmlFor="matte">Cache :</label>
                  <Matte>
                    <Select id="matte" value="" w={45} h={13} ic={6} split />
                  </Matte>
                </DRow>
                <DRow $h={17}>
                  <Select id="trd" label="Tramage de transparence" value="Sans tramage de trans..." w={96} h={13} pad={1} ic={6} />
                  <Grow />
                  <Dim>Quantité :</Dim>
                  <Select id="amount" label="Quantité" value="" w={45} h={13} ic={6} split disabled />
                </DRow>
                <DRow $h={17}>
                  <Check $s={9} id="inter" type="checkbox" />
                  <label htmlFor="inter">Entrelacé</label>
                  <Pairing id="snap" label="Aligner sur Web :" value="0%" />
                </DRow>
                <DRow $h={16}>
                  <Pairing id="lossy" label="Perte :" value="0" />
                </DRow>
              </Group>
              <DRow $h={17}>
                <Nudge />
                <Check $s={9} id="srgb" type="checkbox" defaultChecked />
                <label htmlFor="srgb">Convertir en sRVB</label>
              </DRow>
              <DRow $h={16}>
                <label htmlFor="prev">Aperçu :</label>
                <Select id="prev" value="Couleurs du moniteur" h={13} grow pad={1} ic={7} />
              </DRow>
              <DRow $h={18}>
                <label htmlFor="meta">Métadonnées :</label>
                <Select id="meta" value="Copyright et coordonnées du contact" h={13} grow pad={1} ic={6} />
              </DRow>
            </Group>
            <Group $h={163}>
              <legend>Table des couleurs</legend>
              <Palette>
                {Array.from({ length: 225 }, (_, i) => (
                  <Chip key={i} $c={chipColor(i)} $dot={DOTS.includes(i)} />
                ))}
              </Palette>
              <DRow $h={28}>
                <PalIcons>
                  <b>225</b>
                  <Icon n="checker" s={8} />
                  <Icon n="cube" s={9} />
                  <Icon n="lock" s={8} />
                  <Icon n="page" s={8} />
                  <Icon n="trash" s={8} />
                </PalIcons>
              </DRow>
            </Group>
            <Group $h={46}>
              <legend>Taille de l'image</legend>
              <SizeGrid>
                <div>
                  <DRow $h={16}>
                    <label htmlFor="sw">L :</label>
                    <Input id="sw" value="8192" w={28} h={13} pad={1} /> px
                  </DRow>
                  <DRow $h={16}>
                    <label htmlFor="sh">H :</label>
                    <Input id="sh" value="4096" w={28} h={13} pad={1} /> px
                  </DRow>
                </div>
                <Bracket />
                <Icon n="chain" s={9} />
                <div>
                  <DRow $h={16}>
                    <Grow />
                    <label htmlFor="pc">Pourcentage :</label>
                    <Input id="pc" value="81,92" w={36} h={13} pad={1} /> %
                  </DRow>
                  <DRow $h={16}>
                    <label htmlFor="ql">Qualité :</label>
                    <Select id="ql" value="Bicubique" h={13} grow pad={1} ic={7} />
                  </DRow>
                </div>
              </SizeGrid>
            </Group>
            <Group $h={45}>
              <legend>Animation</legend>
              <DRow $h={13} $off>
                <label htmlFor="loop">Options de boucle :</label>
                <Dimmed>
                  <Select id="loop" value="Une fois" h={12} grow pad={1} ic={7} disabled />
                </Dimmed>
              </DRow>
              <DRow $h={19} $off>
                <Grow />
                1 sur 1
                <Grow />
                <Steps>
                  {["first", "prev", "play", "next", "last"].map((n) => (
                    <button key={n} aria-label={n}>
                      <Icon n={n} s={8} />
                    </button>
                  ))}
                </Steps>
              </DRow>
            </Group>
          </DSide>
        </DCols>
        <DButtons>
          <DBtn $w={49}>Aperçu...</DBtn>
          <DBtn $w={33} aria-label="Navigateur">
            <Icon n="globe" s={13} />
            <Icon n="chevron" s={6} />
          </DBtn>
          <Grow />
          <Pill $main>Enregistrer...</Pill>
          <Pill>Annuler</Pill>
          <Pill>Terminer</Pill>
        </DButtons>
      </DRight>
    </DMain>
  </Dialog>
);

/* ---------- pieces of the page ---------- */

const TOOLS = [
  "move", "marquee", "lasso", "quick", "crop", "dropper", "heal", "brush", "stamp", "history", "eraser",
  "gradient", "drop", "dodge", "pen", "type", "select", "line", "hand", "zoom", "dots",
];
const LAYERS = [
  "_likes", "votes.gif", "user-groups.jpg", "temporary-ban.png", "tags", "status", "shares", "search-musicians",
  "reports", "ranks", "posts", "pictures", "messages", "ip-adresses",
];

const Wires = () => (
  <Ants aria-hidden="true">
    <g fill="none" strokeWidth="4">
      <path stroke="#f00" d="M491 37h-14v9M584 81h150M22 355v175h8M477 350v20M906 350v20" />
      <path stroke="#0ff" d="M514 34h15v12M696 188h30M37 350v20" />
      <path stroke="#00a651" d="M704 54h22M287 350v20" />
      <path stroke="#754c24" d="M673 272h39v-72h20M224 350v20M521 350v20" />
      <path stroke="#00f" d="M14 355v243h20M500 350v20M725 355v20" />
      <path stroke="#39b54a" d="M29 350v20" />
      <path stroke="#000" d="M257 350v20" />
      <path stroke="#f26c4f" d="M420 364h29v-14" />
      <path stroke="#fff200" strokeWidth="6" d="M539 355h40M541 366h38" />
      <path stroke="#000" strokeWidth="1" d="M539 351v18M539 362h40" />
      <path stroke="#222" strokeWidth="1" strokeDasharray="4 5" d="M5 .5h1249M.5 0v625M0 624.500h1249M1248.500 0v625" />
    </g>
    <path d="M1 600v24h14v-4h-10v-20z" fill="#fff" stroke="#222" />
    <rect x="618" y="0" width="13" height="4" fill="#fff" stroke="#222" />
  </Ants>
);
const Pivot = styled.svg`
  position: absolute;
  left: 617px;
  top: 306px;
  width: 14px;
  height: 14px;
  fill: none;
  stroke: #222;
`;

const TaskIcon = ({ kind }: { kind: string }) => (
  <Svg $s={34} viewBox="0 0 34 34" aria-hidden="true">
    {kind === "start" && (
      <g>
        <defs>
          <radialGradient id="orb" cx="0.500" cy="0.900" r="0.900">
            <stop offset="0" stopColor="#3fc3ef" />
            <stop offset="0.500" stopColor="#1d5f93" />
            <stop offset="1" stopColor="#7d9cb8" />
          </radialGradient>
        </defs>
        <circle cx="17" cy="17" r="17" fill="url(#orb)" stroke="#2c4f73" />
        <g transform="translate(17 17) scale(1.150) translate(-16 -17)">
          <path d="M9 10c3-2 5-2 7.500-.5l-2 7C12 15 10 15 7.500 16.500z" fill="#e8662b" />
          <path d="M18 10c3 1.500 5 1.500 8-.5l-2 7c-3 2-5 2-8 .5z" fill="#9bc53d" />
          <path d="M7 18c3-2 5-2 7.500-.5l-2 7C10 23 8 23 5.500 24.500z" fill="#4b9be0" />
          <path d="M15.500 18.500c3 1.500 5 1.500 8-.5l-2 7c-3 2-5 2-8 .5z" fill="#fbd03b" />
        </g>
      </g>
    )}
    {kind === "explorer" && (
      <g>
        <path d="M2 6l8-2 4 3 16-1v22H2z" fill="#e9c869" />
        <path d="M5 4h6v5H5z" fill="#3c9a4b" />
        <path d="M18 5h7v5h-7z" fill="#5b9bd8" />
        <path d="M2 9h28l2 3-1 17H3z" fill="#f7e6a4" stroke="#d0ac4c" />
        <path d="M6 31v-8c0-2 1-3 3-3h15c2 0 3 1 3 3v8h-5v-6H11v6z" fill="#9bd4f2" stroke="#5fa9d3" />
      </g>
    )}
    {kind === "chrome" && (
      <g>
        <circle cx="17" cy="17" r="14" fill="#db4437" />
        <path d="M4.900 10A14 14 0 0 0 15 31l7-11z" fill="#0f9d58" />
        <path d="M29 10a14 14 0 0 1-14 21l8-11-1-10z" fill="#ffcd40" />
        <circle cx="17" cy="17" r="6.500" fill="#fff" />
        <circle cx="17" cy="17" r="5.200" fill="#4285f4" />
      </g>
    )}
    {kind === "firefox" && (
      <g>
        <circle cx="18" cy="16" r="13" fill="#2a6bb8" />
        <path d="M4 6c2 3 4 2 8 2-2 2-1 4 2 5 3 0 3 1 1 3-2 1-3 4 0 6 4 2 8-1 10-5 1-4 0-7-1-9 5 3 8 9 6 14-3 10-16 12-23 5C1 21 1 12 4 6z" fill="#e66b1c" />
        <path d="M27 9c5 5 5 13-1 18 3-5 3-12 1-18z" fill="#fbc02d" />
      </g>
    )}
    {kind === "npp" && (
      <g>
        <path d="M5 3h19l4 5v24H5z" fill="#fafafa" stroke="#777" />
        <path d="M6 14h21v17H6z" fill="#8fd14f" />
        <path d="M6 12h21v8H6z" fill="#d6efb8" />
        <path d="M5 4h20" stroke="#555" strokeWidth="2" strokeDasharray="1.500 1.500" />
        <path d="M31 3l3 2-11 22-4 3 1-5z" fill="#f2a93b" stroke="#a8641b" />
        <text x="8" y="22" fontSize="11" fontWeight="700" fontFamily="Liberation Sans, sans-serif" fill="#222">n++</text>
      </g>
    )}
    {kind === "sublime" && (
      <g>
        <rect x="3" y="3" width="28" height="29" rx="3" fill="#e6e6e6" stroke="#888" />
        <path d="M5 2h24v20l1 7H4l1-7z" fill="#3c3c3c" />
        <path d="M5 21h24l1 8H4z" fill="#555" />
        <text x="11" y="18" fontSize="17" fontWeight="700" fontFamily="Liberation Sans, sans-serif" fill="#f79a4e">S</text>
      </g>
    )}
    {kind === "git" && (
      <g>
        <path d="M17 1l7 7-7 7-7-7z" fill="#f05b52" />
        <path d="M9 9l7 8-7 8-8-8z" fill="#74a5ea" />
        <path d="M25 9l8 8-8 8-7-8z" fill="#79c879" />
        <path d="M17 18l8 8-8 8-8-8z" fill="#f9d15b" />
        <path d="M14 6l6 6M20 12v12M17 20l6-6" stroke="#fff" strokeWidth="1.500" fill="none" />
      </g>
    )}
    {kind === "u" && (
      <g>
        <rect x="2" y="1" width="30" height="32" rx="3" fill="#1b1b9c" />
        <path d="M9 3h6l-1 14c0 4 5 4 6 0l2-14h5l-2 16c-2 8-16 8-17-1z" fill="#fff" />
        <path d="M8 31c6-4 13-4 18 0l-4 1-5-2-5 2z" fill="#cfd3ff" />
      </g>
    )}
    {kind === "tree" && (
      <g fill="none" stroke="#fff" strokeWidth="1.500">
        <circle cx="17" cy="17" r="13" fill="#15325e" strokeWidth="2" />
        <path d="M17 27V8M17 22l-6-4v-5M17 22l6-4v-5M17 16l-4-3V9M17 16l4-3V9M11 18l-3-1M23 18l3-1" />
        <path d="M17 25l-3 4M17 25l3 4" />
      </g>
    )}
    {kind === "ps" && (
      <g>
        <rect x="4" y="3" width="26" height="27" fill="#0a1f33" stroke="#00c8ff" strokeWidth="2.500" />
        <text x="8" y="22" fontSize="15" fontWeight="700" fontFamily="Lato, sans-serif" fill="#00c8ff">Ps</text>
      </g>
    )}
    {kind === "spotify" && (
      <g>
        <circle cx="17" cy="17" r="16" fill="#1ed760" />
        <path d="M8 12c7-2 13-1 19 2M9 17.500c6-1.500 11-1 16 1.700M10 22.500c5-1.200 9-.8 13 1.500" fill="none" stroke="#111" strokeWidth="2.800" strokeLinecap="round" />
      </g>
    )}
  </Svg>
);

const MENU_TITLES = ["Fichier", "Edition", "Image", "Calque", "Texte", "Sélection", "Filtre", "3D", "Affichage", "Fenêtre", "Aide"];

const arrowV = (x: number, y1: number, y2: number) =>
  `M${x - 0.5} ${y1 + 2}h1V${y2 - 2}h-1zM${x} ${y1}l2.500 3.500h-5zM${x} ${y2}l2.500-3.500h-5z`;
const arrowH = (x1: number, x2: number, y: number) =>
  `M${x1 + 2} ${y - 0.5}H${x2 - 2}v1H${x1 + 2}zM${x1} ${y}l3.500-2.500v5zM${x2} ${y}l-3.500-2.500v5z`;

const Glyph = ({ kind }: { kind: string }) => (
  <GlyphSvg viewBox="0 0 18 18" aria-hidden="true">
    {kind === "size" && (
      <g fontWeight="700">
        <text x="0" y="15" fontSize="10">T</text>
        <text x="5" y="15" fontSize="19">T</text>
      </g>
    )}
    {kind === "lead" && (
      <g fontFamily="Liberation Sans, sans-serif">
        <path d={arrowV(3, 7, 17)} />
        <text x="7" y="8" fontSize="9">A</text>
        <text x="7" y="17" fontSize="9">A</text>
        <path d="M6 8.500h11v1H6zM6 17h11v1H6z" />
      </g>
    )}
    {kind === "kern" && (
      <g fontFamily="Liberation Sans, sans-serif">
        <text x="0" y="11" fontSize="12">V/A</text>
        <path d="M10 15.500h8v1h-8zM9 16l3.500-2.500v5z" />
      </g>
    )}
    {kind === "track" && (
      <g fontFamily="Liberation Sans, sans-serif" fontWeight="700">
        <path d="M0 0h18v12H0z" />
        <text x="1" y="11" fontSize="12" fill="#444">VA</text>
        <path d={arrowH(0, 18, 15.5)} />
      </g>
    )}
    {kind === "vscale" && (
      <g fontWeight="700">
        <path d={arrowV(2.5, 3, 16)} />
        <text x="5" y="16" fontSize="19">T</text>
      </g>
    )}
    {kind === "hscale" && (
      <g fontWeight="700">
        <text x="3" y="12" fontSize="18">T</text>
        <path d={arrowH(0, 18, 15.5)} />
      </g>
    )}
    {kind === "shift" && (
      <g fontFamily="Liberation Sans, sans-serif">
        <text x="0" y="13" fontSize="13">A</text>
        <text x="9" y="8" fontSize="9">a</text>
        <path d="M0 14.500h9v1H0zM9 9.500h7v1H9zM12.500 13h1v5h-1zM13 11.500l2.500 3.500h-5z" />
      </g>
    )}
    {kind === "aa" && (
      <g fontFamily="Liberation Sans, sans-serif">
        <text x="2" y="9" fontSize="11">a</text>
        <text x="9" y="14" fontSize="11">a</text>
      </g>
    )}
  </GlyphSvg>
);

const Character = () => (
  <Float $x={1688} $y={148} $w={221} $h={264} aria-label="Caractère">
    <FloatHead>
      <Icon n="dleft" s={8} />
      <Icon n="close" s={7} />
    </FloatHead>
    <Tabs>
      <Tab $w={63} $on>Caractère</Tab>
      <Tab $w={71}>Paragraphe</Tab>
      <Grow />
      <Icon n="burger" s={10} />
    </Tabs>
    <CharBody>
      <CharRow>
        <Nudge />
        <Select id="font" label="Police" value="Calibri" w={122} h={19} pad={4} split />
        <Grow />
        <Select id="face" label="Style" value="Bold" w={75} h={19} pad={4} split />
      </CharRow>
      <CharRow $mt={6}>
        <Glyph kind="size" />
        <Select id="size" label="Corps" value="48 pt" w={77} h={19} pad={4} split />
        <Grow />
        <Glyph kind="lead" />
        <Select id="lead" label="Interligne" value="(Auto)" w={73} h={19} pad={4} split />
      </CharRow>
      <CharRow>
        <Glyph kind="kern" />
        <Select id="kern" label="Crénage" value="Métrique" w={77} h={19} pad={4} split />
        <Grow />
        <Glyph kind="track" />
        <Select id="track" label="Approche" value="0" w={73} h={19} pad={4} split />
      </CharRow>
      <CharRow $mt={5}>
        <Glyph kind="vscale" />
        <Input id="vs" label="Échelle verticale" value="100 %" w={56} h={17} />
        <Grow />
        <Glyph kind="hscale" />
        <Input id="hs" label="Échelle horizontale" value="100 %" w={56} h={17} />
        <Nudge />
      </CharRow>
      <CharRow>
        <Glyph kind="shift" />
        <Input id="bs" label="Décalage" value="0 pt" w={56} h={17} />
        <Grow />
        <span>Couleur :</span>
        <Nudge />
        <Patch aria-label="Couleur du texte" />
        <Nudge />
      </CharRow>
      <Faces $mt={7}>
        <Face $bold>T</Face>
        <Face $bold $css="font-style: italic;">T</Face>
        <Face $bold $css="font-size: 14px;">TT</Face>
        <Face $bold>T<small>T</small></Face>
        <Face $bold>T<small>¹</small></Face>
        <Face $bold>T<small>₁</small></Face>
        <Face $bold $css="text-decoration: underline; text-underline-offset: 3px;">T</Face>
        <Face $bold $css="text-decoration: line-through;">T</Face>
      </Faces>
      <Faces $mt={8}>
        <Face $on>fi</Face>
        <Face $on $css="font-style: italic;">o</Face>
        <Face>st</Face>
        <Face $off $css="font-style: italic;">A</Face>
        <Face $css="text-decoration: overline;">aa</Face>
        <Face $off $css="font-style: italic;">T</Face>
        <Face>1<small>st</small></Face>
        <Face>½</Face>
      </Faces>
      <CharRow $mt={7}>
        <Nudge />
        <Select id="lang" label="Langue" value="Français" w={111} h={19} pad={4} />
        <Grow />
        <Glyph kind="aa" />
        <Grow />
        <Select id="aa" label="Lissage" value="Nette" w={68} h={19} pad={4} />
      </CharRow>
    </CharBody>
  </Float>
);

const History = () => (
  <Float $x={1362} $y={0} $w={208} $h={160} aria-label="Historique">
    <FloatHead>
      <Icon n="dleft" s={8} />
      <Icon n="close" s={7} />
    </FloatHead>
    <Tabs>
      <Tab $w={68} $on>Historique</Tab>
      <Grow />
      <Icon n="burger" s={10} />
    </Tabs>
    <HistoryList>
      <HistoryCol>
        <Snapshot>
          <i />
        </Snapshot>
        <HistoryRow $h={25} $pr={103}>Ouvrir</HistoryRow>
        <HistoryRow $h={23} $pr={12}>Appliquer la couleur de f...</HistoryRow>
        <HistoryRow $h={23} $pr={12}>Appliquer la couleur de f...</HistoryRow>
      </HistoryCol>
      <Scroll>
        <Icon n="up" s={9} />
        <Thumb $h={19} $gap={20} />
        <Icon n="chevron" s={9} />
      </Scroll>
    </HistoryList>
    <HistoryFoot>
      <Icon n="newdoc" s={13} />
      <Icon n="camera" s={13} />
      <Icon n="trash" s={12} />
    </HistoryFoot>
  </Float>
);

export default function App() {
  return (
    <Shell>
      <Global />
      <MenuBar>
        <PsMark>Ps</PsMark>
        {MENU_TITLES.map((t, i) => (
          <MenuTitle key={t} $open={i === 0}>
            {t}
          </MenuTitle>
        ))}
        <WinButtons>
          <IconButton $w={28} $tone="#bbb" aria-label="Réduire"><Icon n="min" s={10} /></IconButton>
          <IconButton $w={27} $tone="#bbb" aria-label="Restaurer"><Icon n="restore" s={12} /></IconButton>
          <IconButton $w={47} $tone="#bbb" aria-label="Fermer"><Icon n="close" s={9} /></IconButton>
        </WinButtons>
      </MenuBar>

      <OptionsBar>
        <Cell $w={347} $dim>
          <CropSlot>
            <Icon n="crop" s={16} />
          </CropSlot>
          <Grow />
          <Input id="res" label="Résolution" value="" w={60} h={17} />
        </Cell>
        <Cell $w={66}>
          <Nudge />
          <Rule />
          <Plain>Effacer</Plain>
        </Cell>
        <Cell $w={98} $pl={11}>
          <Icon n="level" s={17} />
          <Nudge />
          <Nudge />
          <Gray>Désincliner</Gray>
        </Cell>
        <Cell $w={80}>
          <Rule />
          <Nudge />
          <Nudge />
          <Icon n="mesh" s={16} />
          <Grow />
          <Icon n="gear" s={14} />
          <Spacer />
          <Rule />
        </Cell>
        <Cell $w={161} $pl={8}>
          <Check $s={12} id="del" type="checkbox" defaultChecked />
          <label htmlFor="del">Supprimer les pixels rognés</label>
        </Cell>
        <Cell $w={264} $dim>
          <Check $s={11} id="aware" type="checkbox" disabled />
          <label htmlFor="aware">Contenu pris en compte</label>
        </Cell>
        <IconButton $tone="#9a9a9a" aria-label="Réinitialiser"><Icon n="undo" s={16} /></IconButton>
        <Grow />
        <Row $gap={9}>
          <Icon n="search" s={14} />
          <Rule />
          <Icon n="workspace" s={16} />
          <Icon n="chevron" s={10} />
        </Row>
      </OptionsBar>

      <Main>
        <Tools>
          <Strip>
            <Icon n="dright" s={8} />
          </Strip>
          <Grip />
          {TOOLS.map((t) => (
            <Tool key={t} $on={t === "crop"} aria-label={t}>
              <Icon n={t} s={15} />
            </Tool>
          ))}
          <Swatches>
            <Row $gap={8} $h={18}>
              <MiniPair />
              <Icon n="swap" s={9} />
            </Row>
            <Pair>
              <Swatch $c="#fff" $x={11} $y={9} aria-label="Arrière-plan" />
              <Swatch $c={C.red} $x={1} $y={1} aria-label="Premier plan" />
            </Pair>
          </Swatches>
          <Tool aria-label="Masque"><Icon n="mask" s={16} /></Tool>
          <Tool aria-label="Écran"><Icon n="screens" s={16} /></Tool>
        </Tools>

        <Doc>
          <DocTabs>
            <DocTab $w={426} $on>
              schema.psd @ 12,5% (temporary-ban.png, RVB/8)
              <Icon n="close" s={6} />
            </DocTab>
            <DocTab $w={245}>
              Sans titre-1 @ 33,3% (Calque 1, RVB/8) *
              <Icon n="close" s={6} />
            </DocTab>
          </DocTabs>
          <Stage>
            <Canvas>
              <Artboard>
                <Wires />
                <NodeName $x={527} $y={3}>users</NodeName>
                <Node $x={491} $y={21} $w={105} $h={26} $in={8}>
                  <div><u>id</u></div>
                </Node>
                <NodeName $x={625} $y={2}>tags</NodeName>
                <Node $x={620} $y={20} $w={88} $h={49}>
                  <div><u>id</u></div>
                  <div>#element_id</div>
                </Node>
                <NodeName $x={586} $y={121}>posts</NodeName>
                <Node $x={579} $y={138} $w={124} $h={64}>
                  <div><u>id</u></div>
                  <div>#user_id_poster</div>
                  <div>#element_id_wall</div>
                </Node>
                <NodeName $x={585} $y={205}>shares</NodeName>
                <Node $x={579} $y={222} $w={100} $h={64}>
                  <div><u>id</u></div>
                  <div>#user_id</div>
                  <div>#shareable_id</div>
                </Node>
                <NodeName $x={587} $y={288}>comments</NodeName>
                <Node $x={580} $y={308} $w={138} $h={70}>
                  <div><u>id</u></div>
                  <div>#poster_id</div>
                  <div>#commentable_id</div>
                </Node>
                <Node $x={305} $y={314} $w={124} $h={80} $in={8}>
                  <div />
                  <div />
                  <div>#music_three_id</div>
                </Node>
                <Node $x={946} $y={346} $w={87} $h={60} $in={6}>
                  <div><u>id</u></div>
                </Node>
                <Pivot viewBox="0 0 14 14">
                  <circle cx="7" cy="7" r="3.500" />
                  <path d="M7 0v4M7 10v4M0 7h4M10 7h4" />
                </Pivot>
              </Artboard>
            </Canvas>
            <VBar />
          </Stage>
          <Status>
            <span>12,5 %</span>
            <div>
              Doc : 143,1 Mo/484,4 Mo <Icon n="right" s={8} />
            </div>
          </Status>
        </Doc>

        <MiniDock>
          <Strip />
        </MiniDock>

        <Dock $w={288}>
          <Strip $end>
            <Icon n="dright" s={8} />
          </Strip>
          <Tabs>
            <Tab $w={60} $on>Couleur</Tab>
            <Grow />
            <Icon n="burger" s={10} />
          </Tabs>
          <ColorBody>
            <ColorField />
            <HueSlot>
              <Icon n="play" s={8} />
              <Hue />
            </HueSlot>
          </ColorBody>
          <Tabs>
            <Tab $w={67} $on $end>Propriétés</Tab>
            <Tab $w={61}>Réglages</Tab>
            <Grow />
            <Icon n="burger" s={10} />
          </Tabs>
          <PropsTitle>Aucune propriété</PropsTitle>
          <PropsBody>
            <VBar />
          </PropsBody>
          <Tabs>
            <Tab $w={55} $on>Calques</Tab>
            <Tab $w={58}>Couches</Tab>
            <Tab $w={49}>Tracés</Tab>
            <Grow />
            <Icon n="burger" s={10} />
          </Tabs>
          <Bar $h={32} $pt={3}>
            <Select id="filter" label="Filtre" value="" w={104} h={19} />
            <Grow />
            <Icon n="image" s={12} />
            <Icon n="adjust" s={12} />
            <Icon n="type" s={11} />
            <Icon n="frame" s={12} />
            <Icon n="smart" s={12} />
            <Grow />
            <Toggle aria-label="Activer le filtrage" />
          </Bar>
          <Bar $h={28}>
            <Select id="blend" label="Mode de fusion" value="" grow h={19} />
            <Row $gap={5}>
              <label htmlFor="op">Opacité :</label>
              <Select id="op" value="100 %" w={56} h={19} pad={4} split />
            </Row>
          </Bar>
          <Bar $h={28}>
            <Grow />
            <Gray><Icon n="checker" s={11} /></Gray>
            <Dim><Icon n="brush" s={12} /></Dim>
            <Dim><Icon n="move" s={13} /></Dim>
            <Icon n="artboard" s={12} />
            <Icon n="lock" s={12} />
            <Spacer />
            <Row $gap={5}>
              <label htmlFor="fill">Fond :</label>
              <Select id="fill" value="100 %" w={56} h={19} pad={4} split />
            </Row>
          </Bar>
          <Layers>
            <LayerList>
              {LAYERS.map((l) => (
                <Layer key={l} $on={l === "temporary-ban.png"}>
                  <EyeCell>
                    <Icon n="eye" s={13} />
                    <Icon n="right" s={10} />
                  </EyeCell>
                  <Icon n="folder" s={14} />
                  <span>{l}</span>
                </Layer>
              ))}
            </LayerList>
            <Scroll>
              <Icon n="up" s={8} />
              <Thumb $h={153} $gap={140} />
              <Icon n="chevron" s={8} />
            </Scroll>
          </Layers>
          <LayerFoot>
            <Dim><Icon n="link" s={14} /></Dim>
            <Fx>fx</Fx>
            <Icon n="fmask" s={13} />
            <Icon n="adjust" s={12} />
            <Icon n="folder" s={12} />
            <Icon n="page" s={11} />
            <Icon n="trash" s={12} />
          </LayerFoot>
        </Dock>

        <LibDock>
          <Strip $end>
            <Icon n="dright" s={8} />
          </Strip>
          <Tabs>
            <Tab $w={83} $on>Bibliothèques</Tab>
            <Grow />
            <Icon n="burger" s={10} />
          </Tabs>
          <LibBody>
            <LibHead>
              <Row $gap={7} $h={24}>
                <Select id="lib" label="Bibliothèque" value="nouveau_schema_relations..." w={170} h={20} pad={9} />
                <TileBtn aria-label="Vignettes"><Icon n="tiles" s={11} /></TileBtn>
                <IconButton $w={24} aria-label="Liste"><Icon n="list" s={12} /></IconButton>
              </Row>
              <LibSearch>
                <Icon n="search" s={12} />
                <Dim>Rechercher dans Adobe Stock</Dim>
              </LibSearch>
            </LibHead>
            <Styles>
              <StyleTile>Aa</StyleTile>
              <StyleTile>Aa</StyleTile>
            </Styles>
          </LibBody>
          <LibFoot>
            <Icon n="plus" s={13} />
            <Icon n="upload" s={13} />
            <Grow />
            <Icon n="cloud" s={15} />
            <Dim><Icon n="trash" s={12} /></Dim>
          </LibFoot>
        </LibDock>
      </Main>

      <Taskbar>
        <TaskItem $w={53} aria-label="Démarrer"><TaskIcon kind="start" /></TaskItem>
        <TaskItem $on aria-label="Explorateur"><TaskIcon kind="explorer" /></TaskItem>
        <TaskItem $on aria-label="Chrome"><TaskIcon kind="chrome" /></TaskItem>
        <TaskItem aria-label="Firefox"><TaskIcon kind="firefox" /></TaskItem>
        <TaskItem aria-label="Notepad++"><TaskIcon kind="npp" /></TaskItem>
        <TaskItem $on aria-label="Sublime Text"><TaskIcon kind="sublime" /></TaskItem>
        <TaskItem $on aria-label="Git"><TaskIcon kind="git" /></TaskItem>
        <TaskItem aria-label="UwAmp"><TaskIcon kind="u" /></TaskItem>
        <TaskItem aria-label="SourceTree"><TaskIcon kind="tree" /></TaskItem>
        <TaskItem $on aria-label="Photoshop"><TaskIcon kind="ps" /></TaskItem>
        <TaskItem $on aria-label="Spotify"><TaskIcon kind="spotify" /></TaskItem>
        <Tray>
          <Lang>FR</Lang>
          <Svg $s={8} viewBox="0 0 8 8"><path d="M0 6l4-5 4 5z" fill="#fff" stroke="#345" strokeWidth="0.500" /></Svg>
          <Svg $s={16} viewBox="0 0 16 16">
            <path d="M2 2h6v7H2M8 4h6c-1 2-1 4 1 6H9" fill="#fff" stroke="#2c3e50" strokeWidth="1" />
            <path d="M1.500 0v16" stroke="#fff" strokeWidth="2" />
          </Svg>
          <Svg $s={16} viewBox="0 0 16 16">
            <path d="M5 4h10v8H5zM7 14h6" fill="#50657c" stroke="#fff" strokeWidth="1.600" />
            <path d="M1 1h4v4H1zM3 5v10h3" fill="none" stroke="#fff" strokeWidth="1.600" />
          </Svg>
          <Clock>
            13:25
            <br />
            14/02/2017
          </Clock>
          <Peek aria-label="Afficher le Bureau" />
        </Tray>
      </Taskbar>

      <Character />
      <History />
      <MenuBox items={FILE} $x={40} $y={23} $w={281} />
      <MenuBox items={EXPORT} $x={316} $y={288} $w={331} />
      <RedArrow viewBox="0 0 134 24">
        <path d="M0 6h67V0l67 12-67 12v-7H0z" fill="#f00" />
      </RedArrow>
      <Ring $x={313} $y={357} $w={341} $h={38} />
      <SaveForWeb />
      <Callout>
        {[
          "après la création du zoning d’une page (schéma très basique",
          "d’une page en noir, blanc et nuances de gris servant surtout au",
          "placement des différentes fonctions de cette page), l’export pour",
          "le Web permet de créer une image visible sur site web qui",
          "servira de ‘calque’ pour la création de la page en HTML/CSS",
        ].join("\n")}
      </Callout>
    </Shell>
  );
}
